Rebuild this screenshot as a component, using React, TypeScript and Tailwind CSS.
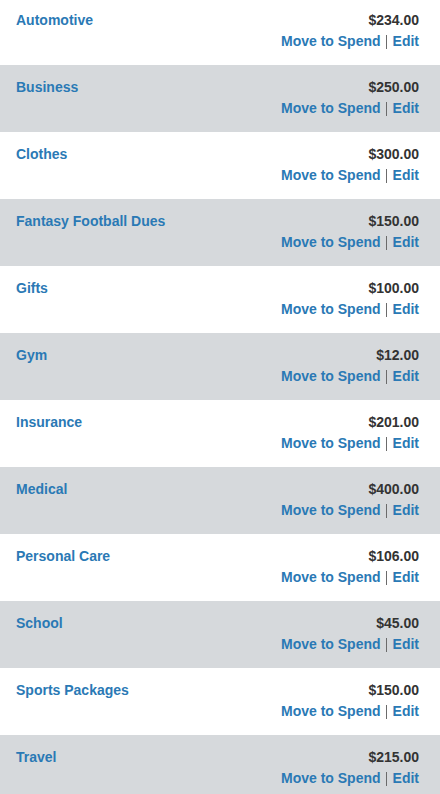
import React from "react";

const items: [string, string][] = [
  ["Automotive", "$234.00"],
  ["Business", "$250.00"],
  ["Clothes", "$300.00"],
  ["Fantasy Football Dues", "$150.00"],
  ["Gifts", "$100.00"],
  ["Gym", "$12.00"],
  ["Insurance", "$201.00"],
  ["Medical", "$400.00"],
  ["Personal Care", "$106.00"],
  ["School", "$45.00"],
  ["Sports Packages", "$150.00"],
  ["Travel", "$215.00"],
];

export default function App() {
  return (
    <div
      className="w-[440px] h-[794px] overflow-hidden bg-white"
      style={{ fontFamily: '"Liberation Sans", Arial, sans-serif' }}
    >
      <div className="mt-[-2px] flex flex-col">
        {items.map(([name, amt], i) => (
          <div
            key={name}
            className={`h-[67px] flex justify-between pl-[16px] pr-[21px] pt-[12px] ${
              i % 2 === 1 ? "bg-[#d6d9dc]" : "bg-white"
            }`}
          >
            <div className="text-[14px] leading-[21px] font-bold text-[#2a79b5]">{name}</div>
            <div className="flex flex-col items-end text-[14px] leading-[21px]">
              <div className="font-bold text-[#333333]">{amt}</div>
              <div className="flex items-center">
                <span className="font-bold text-[#2a79b5]">Move to Spend</span>
                <span className="ml-[5px] mr-[6px] w-px h-[14px] mt-[1px] bg-[#6b6b6b]" />
                <span className="font-bold text-[#2a79b5]">Edit</span>
              </div>
            </div>
          </div>
        ))}
      </div>
    </div>
  );
}
